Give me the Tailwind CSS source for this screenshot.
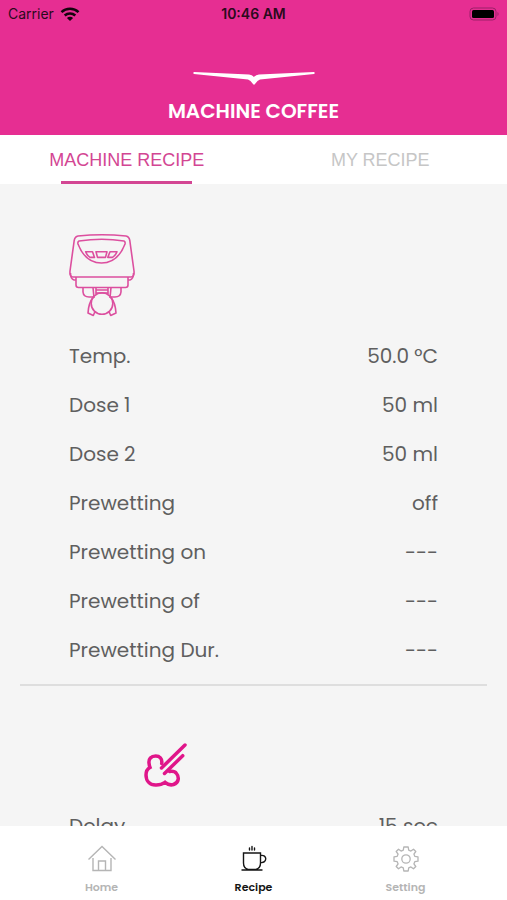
<!DOCTYPE html>
<html lang="en">
<head>
<meta charset="utf-8">
<meta name="viewport" content="width=device-width, initial-scale=1">
<title>Machine Coffee</title>
<script src="https://cdn.jsdelivr.net/npm/@tailwindcss/browser@4"></script>
</head>
<body class="flex h-screen flex-col overflow-hidden bg-[#f5f5f5] font-['Poppins','Inter',sans-serif] text-[#5f5f5f]">
  <header class="shrink-0 bg-[#e62e92] pb-2.5">
    <div class="grid h-7 grid-cols-3 items-center pr-2 pl-2 font-['Inter',sans-serif] text-sm text-[#2b0a1c]">
      <div class="flex items-center gap-1.5">
        <span>Carrier</span>
        <svg class="h-[15px] w-5" viewBox="0 0 20 15" fill="none" stroke="#14040d" stroke-width="2.5" aria-hidden="true">
          <path d="M1.5 5.2C6.2.7 13.8.7 18.500 5.2M4.700 8.500C7.700 5.700 12.300 5.700 15.300 8.500"/>
          <path d="M6.900 10.900C8.700 9.300 11.300 9.300 13.100 10.900L10 14Z" fill="#14040d" stroke="none"/>
        </svg>
      </div>
      <time class="text-center font-semibold">10:46 AM</time>
      <svg class="h-[14px] w-[30px] justify-self-end" viewBox="0 0 30 14" aria-hidden="true">
        <rect x="1" y="1" width="26" height="12" rx="3.500" fill="none" stroke="#9b2068"/>
        <rect x="3" y="3" width="22" height="8" rx="1.500" fill="#000"/>
        <path d="M28.500 5v4c1.400-.8 1.400-3.200 0-4Z" fill="#9b2068"/>
      </svg>
    </div>
    <svg class="mx-auto mt-[43px] h-[15px] w-[122px]" viewBox="0 0 122 15" fill="#fff" aria-hidden="true">
      <path d="M1 1L56 3.500Q59 3.700 61 6Q63 3.700 66 3.500L121 1Q122.500 2 121 3L67 8.500Q64.500 9 62 13Q61 14.500 60 13Q57.500 9 55 8.500L1 3Q-.5 2 1 1Z"/>
    </svg>
    <h1 class="pt-[11px] text-center text-xl leading-7 font-semibold text-white">MACHINE COFFEE</h1>
  </header>

  <div role="tablist" class="grid h-[49px] shrink-0 grid-cols-2 bg-white font-['Liberation_Sans',Arial,sans-serif] text-lg">
    <button role="tab" aria-selected="true" class="flex flex-col items-center text-[#d34693]">
      <span class="flex-1 pt-[13px] leading-6">MACHINE RECIPE</span>
      <span class="h-[3px] w-[131px] bg-[#d34693]"></span>
    </button>
    <button role="tab" aria-selected="false" class="flex flex-col items-center text-[#c6c6c6]">
      <span class="flex-1 pt-[13px] leading-6">MY RECIPE</span>
    </button>
  </div>

  <main class="min-h-0 flex-1 overflow-hidden px-5">
    <section class="border-b-2 border-[#dedede] px-[49px] pt-12 pb-[10px]">
      <svg class="-ml-px h-[86px] w-[68px]" viewBox="0 0 68 86" fill="none" stroke="#dc4f9f" stroke-width="1.600" stroke-linejoin="round" aria-hidden="true">
        <path d="M10 4Q34 1.500 58 4Q61 4.500 61.800 8.500L66 39Q66.500 45 63 45H5Q1.500 45 2 39L6.200 8.500Q7 4.500 10 4Z"/>
        <path d="M11 9Q34 5.500 56 9Q57.500 9.500 57 12C52 25 44 31 33.500 31S15 25 10 12Q9.500 9.500 11 9Z"/>
        <path d="M17.700 19.700H24.500L26.500 25.400H22Q19 23.500 17.700 19.700ZM28 19.700H39L37.500 25.400H29.500ZM42 19.700H49Q47.500 23.500 44.500 25.400H39.800Z"/>
        <path d="M2.500 41Q2.500 47 6 48H8V45M65.500 41Q65.500 47 62 48H60V45M8 45V53Q8 55.500 10.500 55.500H57.500Q60 55.500 60 53V45"/>
        <path d="M15 55.500V60Q15.500 65 21 65H25M53 55.500V60Q52.500 65 47 65H43M25 55.500L26 66M43 55.500L42 66M28 55.500V62M40 55.500V62M28 58H40M28 61H40"/>
        <circle cx="34" cy="71.500" r="10.800"/>
        <path d="M25.300 65Q20.500 71 20 81L25.300 83.500L27 79.500M42.700 65Q47.500 71 48 81L42.700 83.500L41 79.500"/>
      </svg>
      <table class="mt-[13px] w-full text-xl">
        <tbody>
          <tr class="h-[49px]"><th scope="row" class="p-0 text-left font-normal">Temp.</th><td class="p-0 text-right">50.0 °C</td></tr>
          <tr class="h-[49px]"><th scope="row" class="p-0 text-left font-normal">Dose 1</th><td class="p-0 text-right">50 ml</td></tr>
          <tr class="h-[49px]"><th scope="row" class="p-0 text-left font-normal">Dose 2</th><td class="p-0 text-right">50 ml</td></tr>
          <tr class="h-[49px]"><th scope="row" class="p-0 text-left font-normal">Prewetting</th><td class="p-0 text-right">off</td></tr>
          <tr class="h-[49px]"><th scope="row" class="p-0 text-left font-normal">Prewetting on</th><td class="p-0 text-right">---</td></tr>
          <tr class="h-[49px]"><th scope="row" class="p-0 text-left font-normal">Prewetting of</th><td class="p-0 text-right">---</td></tr>
          <tr class="h-[49px]"><th scope="row" class="p-0 text-left font-normal">Prewetting Dur.</th><td class="p-0 text-right">---</td></tr>
        </tbody>
      </table>
    </section>
    <section class="px-[49px] pt-[57px]">
      <svg class="ml-[75px] h-[46px] w-[44px]" viewBox="0 0 44 46" fill="none" stroke="#e0168a" stroke-width="3.500" stroke-linecap="round" aria-hidden="true">
        <path d="M17.500 25L41 2M20.500 30.500L38.700 12.700"/>
        <path d="M17.700 20.500C18.500 15.500 15.500 13 11.700 13C7 13 4.500 16 5 20Q5.200 22.500 6 24.500C3 26 2 29 2 32C2 38 6 41.800 11.500 42Q17 42.200 21 39.300C24 41.800 27 42.300 29.500 41.500C35.500 39.500 35 33.500 32.500 30.500C31 28.500 28.500 28 25.500 28.500"/>
      </svg>
      <table class="mt-3 w-full text-xl">
        <tbody>
          <tr class="h-[49px]"><th scope="row" class="p-0 text-left font-normal">Delay</th><td class="p-0 text-right">15 sec</td></tr>
        </tbody>
      </table>
    </section>
  </main>

  <nav class="grid h-[74px] shrink-0 grid-cols-[repeat(3,152px)] justify-center bg-white text-[11px] font-semibold" aria-label="Main">
    <a href="#home" class="flex flex-col items-center pt-[18px] text-[#b5b5b5]">
      <svg class="size-[30px]" viewBox="0 0 30 30" fill="none" stroke="currentColor" stroke-width="1.400" aria-hidden="true">
        <path d="M1.500 15.500L15 2.500L28.500 15.500M6 14V26.500H11.500V17H18.500V26.500H24V14M11.500 26.500H18.500"/>
      </svg>
      <span class="mt-[5px] leading-4">Home</span>
    </a>
    <a href="#recipe" aria-current="page" class="flex flex-col items-center pt-[18px] text-[#151515]">
      <svg class="size-[30px]" viewBox="0 0 30 30" fill="none" stroke="currentColor" stroke-width="1.400" stroke-linecap="round" aria-hidden="true">
        <path d="M4.500 9H21.500V19Q21.500 24 17 25.500H9Q4.500 24 4.500 19ZM21.500 11.500C28.500 10 28.500 19.500 21.500 18.500M3 26H23M10.500 4V6M13 2.500V6M15.500 4V6"/>
      </svg>
      <span class="mt-[5px] leading-4">Recipe</span>
    </a>
    <a href="#setting" class="flex flex-col items-center pt-[18px] text-[#b5b5b5]">
      <svg class="size-[30px]" viewBox="0 0 30 30" fill="none" stroke="currentColor" stroke-width="1.300" stroke-linejoin="round" aria-hidden="true">
        <path d="M12.800 3H17.200L17.700 6.200L19.900 7.100L22.500 5.200L24.800 7.500L22.900 10.100L23.800 12.300L27 12.800V17.200L23.800 17.700L22.900 19.900L24.800 22.500L22.500 24.800L19.900 22.900L17.700 23.800L17.200 27H12.800L12.300 23.800L10.100 22.900L7.500 24.800L5.200 22.500L7.100 19.900L6.200 17.700L3 17.200V12.800L6.200 12.300L7.100 10.100L5.200 7.500L7.500 5.200L10.100 7.100L12.300 6.200Z"/>
        <circle cx="15" cy="15" r="4.200"/>
      </svg>
      <span class="mt-[5px] leading-4">Setting</span>
    </a>
  </nav>
</body>
</html>
